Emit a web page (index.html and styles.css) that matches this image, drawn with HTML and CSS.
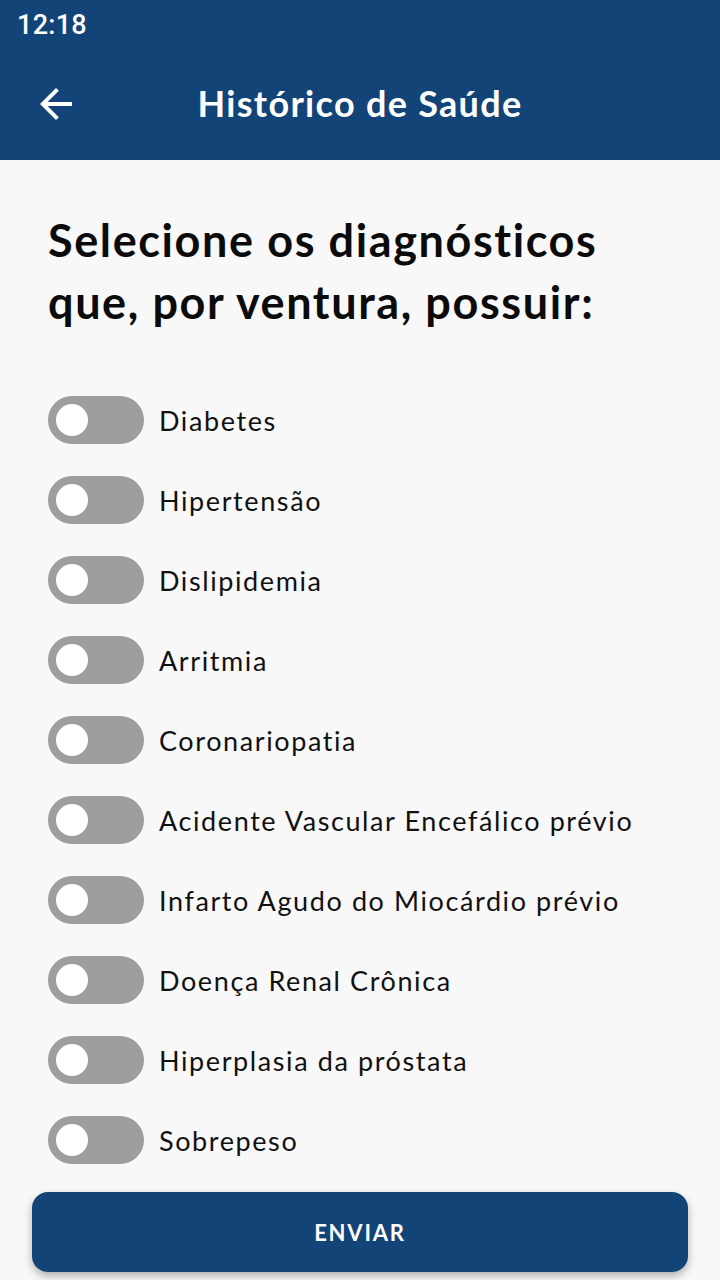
FILE: index.html
```html
<!DOCTYPE html>
<html lang="pt">
<head>
<meta charset="utf-8">
<link rel="stylesheet" href="styles.css">
</head>
<body>
<div class="screen">
  <header class="topbar">
    <div class="status"><span class="time">12:18</span></div>
    <div class="appbar">
      <svg class="back" width="48" height="48" viewBox="0 0 24 24"><path d="M20 11H7.83l5.59-5.59L12 4l-8 8 8 8 1.41-1.41L7.83 13H20v-2z" fill="#fff"/></svg>
      <h1 class="apptitle">Histórico de Saúde</h1>
    </div>
  </header>
  <main class="content">
    <h2 class="question">Selecione os diagnósticos que, por ventura, possuir:</h2>
    <ul class="list">
      <li class="row"><span class="switch"><span class="thumb"></span></span><span class="label">Diabetes</span></li>
      <li class="row"><span class="switch"><span class="thumb"></span></span><span class="label">Hipertensão</span></li>
      <li class="row"><span class="switch"><span class="thumb"></span></span><span class="label">Dislipidemia</span></li>
      <li class="row"><span class="switch"><span class="thumb"></span></span><span class="label">Arritmia</span></li>
      <li class="row"><span class="switch"><span class="thumb"></span></span><span class="label">Coronariopatia</span></li>
      <li class="row"><span class="switch"><span class="thumb"></span></span><span class="label">Acidente Vascular Encefálico prévio</span></li>
      <li class="row"><span class="switch"><span class="thumb"></span></span><span class="label">Infarto Agudo do Miocárdio prévio</span></li>
      <li class="row"><span class="switch"><span class="thumb"></span></span><span class="label">Doença Renal Crônica</span></li>
      <li class="row"><span class="switch"><span class="thumb"></span></span><span class="label">Hiperplasia da próstata</span></li>
      <li class="row"><span class="switch"><span class="thumb"></span></span><span class="label">Sobrepeso</span></li>
    </ul>
  </main>
  <div class="footer">
    <button class="send">ENVIAR</button>
  </div>
</div>
</body>
</html>
```
FILE: styles.css
```css
* { box-sizing: border-box; }
html, body { margin: 0; padding: 0; }
body {
  width: 720px;
  height: 1280px;
  background: #f8f8f8;
  font-family: Lato, "Noto Sans", sans-serif;
  color: #111;
  overflow: hidden;
}
.screen {
  position: relative;
  width: 720px;
  height: 1280px;
  display: flex;
  flex-direction: column;
}
.topbar {
  background: #134477;
  height: 160px;
  color: #fff;
}
.status {
  height: 48px;
  display: flex;
  align-items: center;
  padding-left: 17px;
}
.time {
  font-family: Roboto, sans-serif;
  font-weight: 500;
  font-size: 27px;
  letter-spacing: 0.3px;
  position: relative;
  top: 1px;
}
.appbar {
  height: 112px;
  display: flex;
  align-items: center;
  position: relative;
}
.back {
  position: absolute;
  left: 32px;
  top: 32px;
}
.apptitle {
  margin: 0;
  width: 100%;
  text-align: center;
  font-size: 36px;
  font-weight: 700;
  letter-spacing: 1.3px;
  position: relative;
  top: -1px;
}
.content {
  padding: 49px 0 0 48px;
}
.question {
  margin: 0;
  font-size: 45px;
  line-height: 62px;
  font-weight: 700;
  width: 600px;
  letter-spacing: 1.6px;
  color: #0b0b0b;
}
.list {
  list-style: none;
  margin: 63px 0 0 0;
  padding: 0;
  display: flex;
  flex-direction: column;
  gap: 32px;
}
.row {
  height: 48px;
  display: flex;
  align-items: center;
  gap: 15px;
}
.switch {
  width: 96px;
  height: 48px;
  border-radius: 24px;
  background: #9e9e9e;
  display: flex;
  align-items: center;
  padding-left: 8px;
  flex: none;
}
.thumb {
  width: 32px;
  height: 32px;
  border-radius: 50%;
  background: #fff;
}
.label {
  font-size: 27px;
  letter-spacing: 1.6px;
  color: #111;
}
.footer {
  position: absolute;
  left: 32px;
  right: 32px;
  bottom: 8px;
}
.send {
  width: 100%;
  height: 80px;
  border: none;
  border-radius: 16px;
  background: #134477;
  color: #fff;
  font-family: Lato, sans-serif;
  font-weight: 700;
  font-size: 22px;
  letter-spacing: 1.8px;
  box-shadow: 0 4px 8px rgba(0,0,0,0.3);
}
```
